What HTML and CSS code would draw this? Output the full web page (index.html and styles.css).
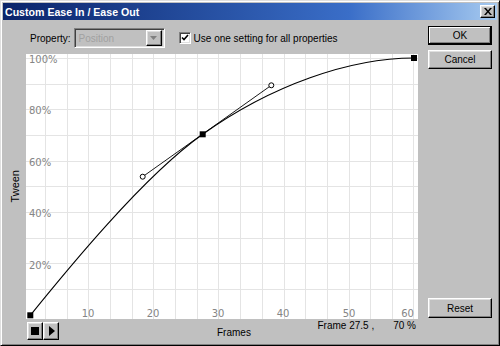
FILE: index.html
```html
<html>
<head>
  <link rel="stylesheet" href="styles.css">
</head>
<body>
  <div class="window">
    <div class="titlebar">
      <span class="title">Custom Ease In / Ease Out</span>
      <span class="close raised">
        <svg width="8" height="7" viewBox="0 0 8 7"><path d="M0 0h2l2 2.5 2-2.5h2l-3 3.5 3 3.5h-2l-2-2.5-2 2.5h-2l3-3.5z" fill="#000"/></svg>
      </span>
    </div>
    <div class="body">
      <div class="main">
        <div class="prop-row">
          <span class="label">Property:</span>
          <span class="combo sunken">
            <span class="combo-text">Position</span>
            <span class="combo-btn raised">
              <svg width="7" height="4" viewBox="0 0 7 4"><path d="M0 0h7l-3.5 4z" fill="#808080"/></svg>
            </span>
          </span>
          <span class="check sunken">
            <svg width="8" height="8" viewBox="0 0 8 8"><path d="M1 3.5l2 2 4-4.5" fill="none" stroke="#000" stroke-width="1.6"/></svg>
          </span>
          <span class="label">Use one setting for all properties</span>
        </div>
        <div class="graph-row">
          <div class="axis-y"><span>Tween</span></div>
          <svg class="graph" width="392" height="265" viewBox="26 54 392 265">
            <rect x="26" y="54" width="392" height="265" fill="#fff"/>
            <g stroke="#e4e4e4" stroke-width="1">
              <path d="M45.5 54v265M67.5 54v265M88.5 54v265M110.5 54v265M132.5 54v265M153.5 54v265M175.5 54v265M197.5 54v265M218.5 54v265M240.5 54v265M262.5 54v265M284.5 54v265M305.5 54v265M327.5 54v265M349.5 54v265M370.5 54v265M392.5 54v265M413.5 54v265"/>
              <path d="M26 289.5h392M26 263.5h392M26 238.5h392M26 212.5h392M26 186.5h392M26 161.5h392M26 135.5h392M26 109.5h392M26 84.5h392M26 58.5h392"/>
            </g>
            <g class="tick" font-family="DejaVu Sans, sans-serif" font-size="10" fill="#858585">
              <text x="29" y="63">100%</text>
              <text x="29" y="114">80%</text>
              <text x="29" y="166">60%</text>
              <text x="29" y="217">40%</text>
              <text x="29" y="269">20%</text>
              <g text-anchor="middle">
                <text x="88" y="317">10</text>
                <text x="153" y="317">20</text>
                <text x="218" y="317">30</text>
                <text x="283" y="317">40</text>
                <text x="349" y="317">50</text>
                <text x="407.5" y="317">60</text>
              </g>
            </g>
            <path d="M30.3 315.3C64 273.7 142.7 176.7 202.7 134.3C271.3 85.3 350 58 414 58" fill="none" stroke="#000" stroke-width="1.1"/>
            <path d="M142.7 176.7L271.3 85.3" fill="none" stroke="#000" stroke-width="0.9"/>
            <circle cx="142.7" cy="176.7" r="2.5" fill="#fff" stroke="#000"/>
            <circle cx="271.3" cy="85.3" r="2.5" fill="#fff" stroke="#000"/>
            <rect x="27.3" y="312.3" width="6" height="6" fill="#000"/>
            <rect x="199.7" y="131.3" width="6" height="6" fill="#000"/>
            <rect x="411" y="55" width="6" height="6" fill="#000"/>
          </svg>
        </div>
        <div class="footer">
          <div class="transport">
            <span class="tbtn raised"><span class="stop"></span></span>
            <span class="tbtn raised"><span class="play"></span></span>
          </div>
          <span class="axis-x">Frames</span>
          <span class="readout"><span>Frame 27.5 ,</span><span>70 %</span></span>
        </div>
      </div>
      <div class="side">
        <span class="btn default raised">OK</span>
        <span class="btn raised">Cancel</span>
        <span class="btn raised reset">Reset</span>
      </div>
    </div>
  </div>
</body>
</html>
```

FILE: styles.css
```css
html, body {
  margin: 0;
  padding: 0;
  background: #c0c0c0;
}
body {
  font-family: "Liberation Sans", Arial, sans-serif;
  font-size: 10px;
  color: #000;
}

.raised {
  box-sizing: border-box;
  border: 1px solid;
  border-color: #fff #000 #000 #fff;
  box-shadow: inset -1px -1px #808080, inset 1px 1px #dfdfdf;
  background: #c0c0c0;
}
.sunken {
  box-sizing: border-box;
  border: 1px solid;
  border-color: #808080 #fff #fff #808080;
  box-shadow: inset 1px 1px #404040, inset -1px -1px #dfdfdf;
}

.window {
  box-sizing: border-box;
  width: 500px;
  height: 346px;
  padding: 2px;
  border: 1px solid;
  border-color: #dfdfdf #000 #000 #dfdfdf;
  box-shadow: inset 1px 1px #fff, inset -1px -1px #808080;
  background: #c0c0c0;
  display: flex;
  flex-direction: column;
}

.titlebar {
  height: 17px;
  flex: none;
  display: flex;
  align-items: center;
  padding: 0 2px 0 2px;
  background: linear-gradient(to right, #0a246a, #3a6ec8 70%, #a6caf0);
}
.title {
  flex: 1;
  color: #fff;
  font-weight: bold;
  font-size: 10.6px;
}
.close {
  width: 15px;
  height: 13px;
  display: flex;
  align-items: center;
  justify-content: center;
}

.body {
  flex: 1;
  display: flex;
}
.main {
  width: 415px;
  display: flex;
  flex-direction: column;
}

.prop-row {
  height: 20px;
  margin: 8px 0 6px;
  padding-left: 27px;
  display: flex;
  align-items: center;
}
.combo {
  width: 91px;
  height: 20px;
  margin-left: 3px;
  display: flex;
  align-items: center;
  padding: 2px;
}
.combo-text {
  flex: 1;
  color: #a0a0a0;
  padding-left: 2px;
}
.combo-btn {
  width: 16px;
  height: 16px;
  display: flex;
  align-items: center;
  justify-content: center;
}
.check {
  width: 12px;
  height: 12px;
  margin: 0 3px 0 14px;
  background: #fff;
  display: flex;
  align-items: center;
  justify-content: center;
}

.graph-row {
  display: flex;
  height: 265px;
}
.axis-y {
  width: 23px;
  display: flex;
  align-items: center;
  justify-content: center;
}
.axis-y span {
  writing-mode: vertical-rl;
  transform: rotate(180deg);
  font-size: 11px;
}
.graph {
  display: block;
}

.footer {
  flex: 1;
  display: flex;
  align-items: flex-start;
}
.transport {
  display: flex;
  margin: 3px 0 0 24px;
}
.tbtn {
  width: 16px;
  height: 18px;
  display: flex;
  align-items: center;
  justify-content: center;
}
.stop {
  width: 8px;
  height: 8px;
  background: #000;
}
.play {
  width: 0;
  height: 0;
  margin-left: 2px;
  border-style: solid;
  border-width: 5px 0 5px 6px;
  border-color: transparent transparent transparent #000;
}
.axis-x {
  margin: 8px 0 0 158px;
}
.readout {
  margin: 1px 2px 0 auto;
  display: flex;
  gap: 19px;
}

.side {
  flex: 1;
  display: flex;
  flex-direction: column;
  padding-left: 10px;
}
.btn {
  width: 64px;
  height: 19px;
  display: flex;
  align-items: center;
  justify-content: center;
  margin-top: 5px;
}
.btn.default {
  margin-top: 6px;
  border-color: #000;
  box-shadow: inset -1px -1px #000, inset 1px 1px #fff, inset -2px -2px #808080;
}
.btn.reset {
  margin: auto 0 25px;
  height: 20px;
}
```
